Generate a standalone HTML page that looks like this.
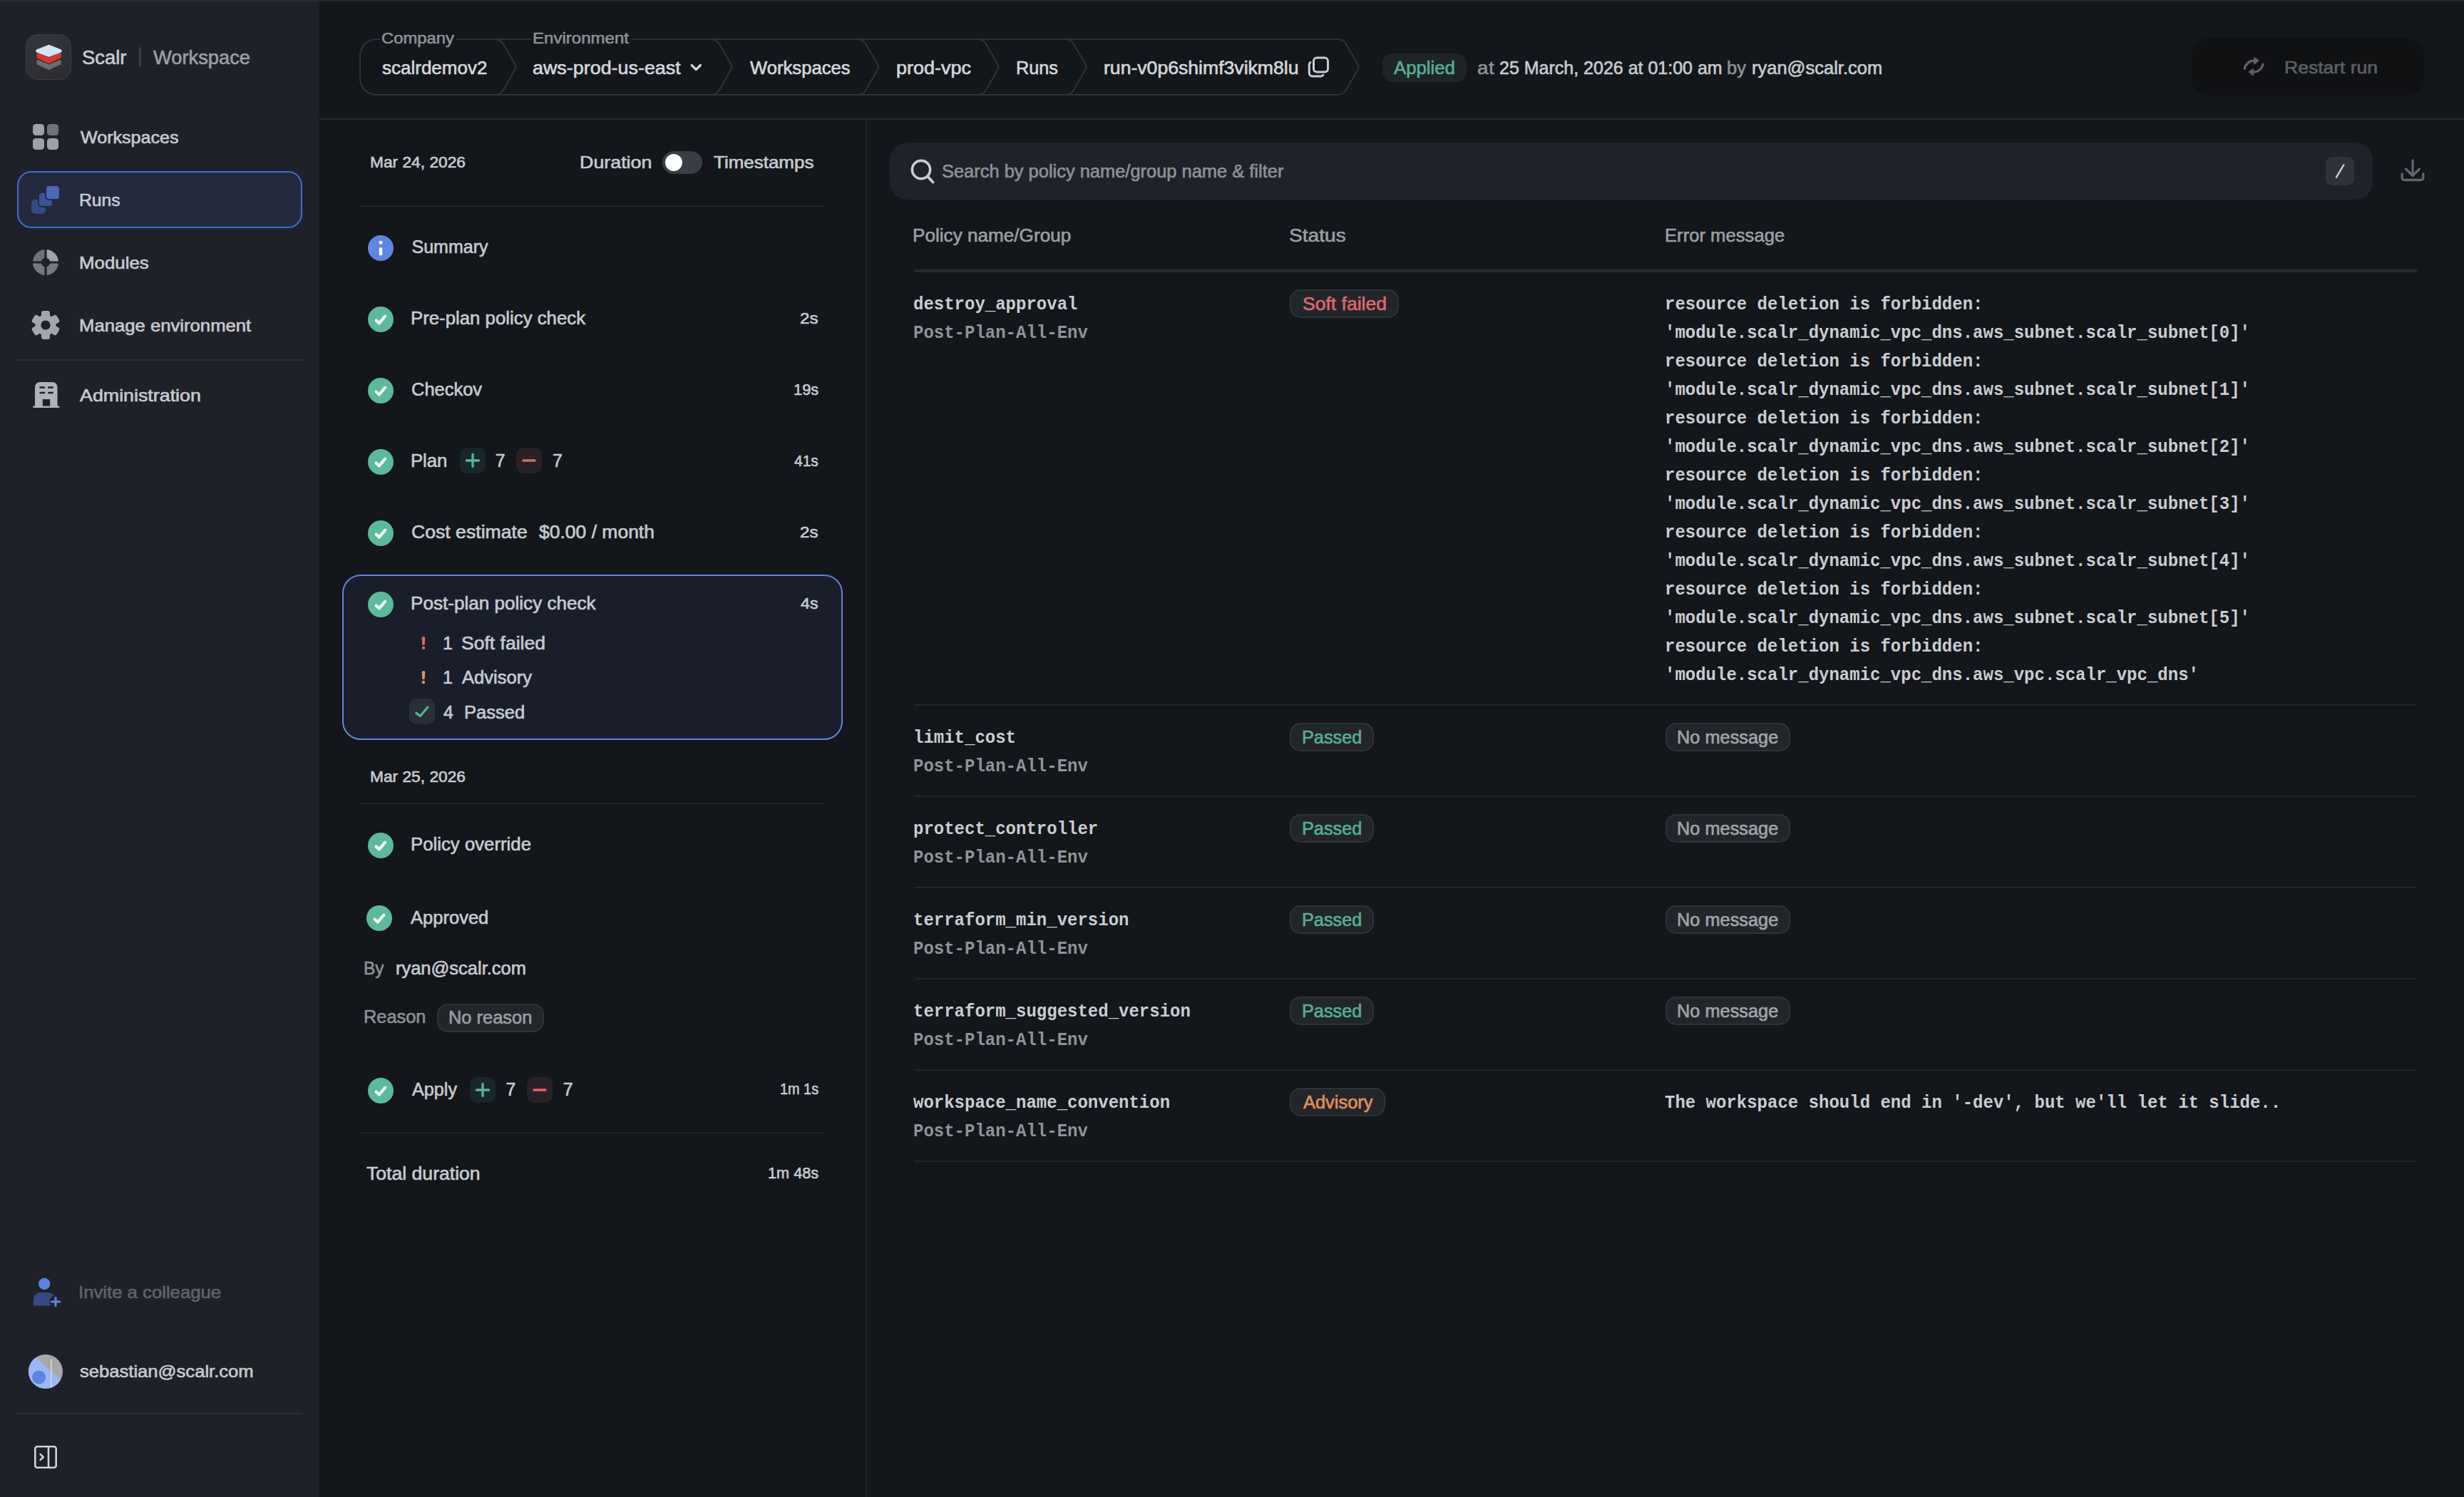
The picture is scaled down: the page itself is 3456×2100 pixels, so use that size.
<!DOCTYPE html>
<html lang="en"><head><meta charset="utf-8"><title>Scalr - Run</title>
<style>
html,body{margin:0;padding:0;background:#13161a;}
body{width:3456px;height:2100px;position:relative;overflow:hidden;font-family:"Liberation Sans",sans-serif;}
.t,.m{position:absolute;white-space:pre;line-height:1;font-kerning:normal;transform-origin:0 0;}
.t{font-family:"Liberation Sans",sans-serif;}
.m{font-family:"Liberation Mono",monospace;}
.b{position:absolute;box-sizing:border-box;}
svg{position:absolute;overflow:visible;}
</style></head><body>
<!-- sidebar -->
<div class="b" style="left:0px;top:0px;width:448px;height:2100px;background:#1f2129;"></div>
<div class="b" style="left:36px;top:48px;width:64px;height:64px;background:linear-gradient(160deg,#34363b,#2a2c31);border-radius:16px;border:1.5px solid #3b3d43;"></div>
<svg style="left:36px;top:48px" width="64" height="64" viewBox="0 0 64 64" fill="none">
<path d="M16.5 37 L32.5 43.5 L48.5 37 L48.5 41.5 L32.5 49 L16.5 41.5 Z" fill="#6b6c70" stroke="#6b6c70" stroke-width="2" stroke-linejoin="round"/>
<path d="M16.5 27 L32.5 34 L48.5 27 L48.5 32.3 L32.5 40 L16.5 32.3 Z" fill="#d8362d" stroke="#d8362d" stroke-width="2" stroke-linejoin="round"/>
<path d="M16.5 23.4 L32.5 17 L48.5 23.4 L32.5 29.7 Z" fill="#cfe6f7" stroke="#cfe6f7" stroke-width="4.5" stroke-linejoin="round"/>
</svg>
<div class="b" style="left:194.5px;top:66px;width:3px;height:28px;background:#3a3d45;border-radius:1.5px;"></div>
<div class="b" style="left:24px;top:240px;width:400px;height:80px;background:#232a3d;border-radius:20px;border:2px solid #3b6dd6;"></div>
<svg style="left:44px;top:172px" width="40" height="40" viewBox="0 0 40 40" fill="none">
<rect x="2" y="2" width="16" height="16" rx="4.5" fill="#9ea2a8"/>
<rect x="22" y="2" width="16" height="16" rx="4.5" fill="#6f7379"/>
<rect x="2" y="22" width="16" height="16" rx="4.5" fill="#9ea2a8"/>
<rect x="22" y="22" width="16" height="16" rx="4.5" fill="#9ea2a8"/>
</svg>
<svg style="left:44px;top:260px" width="40" height="40" viewBox="0 0 40 40" fill="none">
<rect x="0" y="20" width="20" height="20" rx="5" fill="#344a80"/>
<rect x="10" y="10" width="20" height="20" rx="5" fill="#3d5392" stroke="#232a3d" stroke-width="2"/>
<rect x="20" y="0" width="20" height="20" rx="5" fill="#4a67b8" stroke="#232a3d" stroke-width="2"/>
</svg>
<svg style="left:44px;top:348px" width="40" height="40" viewBox="0 0 40 40" fill="none">
<path d="M20 20 L20 2 A18 18 0 0 0 2 20 Z" fill="#6e7278"/>
<path d="M20 20 L38 20 A18 18 0 0 0 20 2 Z" fill="#a0a4aa"/>
<path d="M20 20 L2 20 A18 18 0 0 0 20 38 Z" fill="#767a80"/>
<path d="M20 20 L20 38 A18 18 0 0 0 38 20 Z" fill="#767a80"/>
<path d="M20 0 V40 M0 20 H40" stroke="#1f2129" stroke-width="3.2"/>
<circle cx="20" cy="20" r="6.3" fill="#1f2129"/>
</svg>
<svg style="left:44px;top:436px" width="40" height="40" viewBox="0 0 40 40" fill="none"><g fill="#a3a7ad"><rect x="14" y="0" width="12" height="14" rx="3" transform="rotate(0 20 20)"/><rect x="14" y="0" width="12" height="14" rx="3" transform="rotate(60 20 20)"/><rect x="14" y="0" width="12" height="14" rx="3" transform="rotate(120 20 20)"/><rect x="14" y="0" width="12" height="14" rx="3" transform="rotate(180 20 20)"/><rect x="14" y="0" width="12" height="14" rx="3" transform="rotate(240 20 20)"/><rect x="14" y="0" width="12" height="14" rx="3" transform="rotate(300 20 20)"/><circle cx="20" cy="20" r="14.5"/></g><circle cx="20" cy="20" r="6.6" fill="#1f2129"/></svg>
<div class="b" style="left:24px;top:504px;width:400px;height:2px;background:#2d3038;"></div>
<svg style="left:44px;top:532px" width="40" height="42" viewBox="0 0 40 42" fill="none">
<path d="M5 38 V11 A7 7 0 0 1 12 4 H29.5 A7 7 0 0 1 36.5 11 V38 Z" fill="#b0b4ba"/>
<rect x="2" y="37.5" width="37.5" height="2.6" rx="1.3" fill="#b0b4ba"/>
<rect x="11.3" y="10.2" width="8" height="2.5" rx="1.2" fill="#1f2129"/>
<rect x="23" y="10.2" width="8" height="2.5" rx="1.2" fill="#1f2129"/>
<rect x="11.3" y="17.8" width="8" height="2.5" rx="1.2" fill="#1f2129"/>
<rect x="23" y="17.8" width="8" height="2.5" rx="1.2" fill="#1f2129"/>
<rect x="15.8" y="28" width="10.4" height="9.6" fill="#1f2129"/>
</svg>
<svg style="left:44px;top:1790px" width="44" height="44" viewBox="0 0 44 44" fill="none">
<circle cx="18.2" cy="11" r="8.2" fill="#5b84e0"/>
<path d="M3 41.5 V33 A10 10 0 0 1 13 23 H23.5 A10 10 0 0 1 33.5 33 V41.5 Z" fill="#344a80"/>
<circle cx="34" cy="36" r="8.5" fill="#1f2129"/>
<path d="M34 30.3 V41.7 M28.3 36 H39.7" stroke="#5b84e0" stroke-width="3.2" stroke-linecap="round"/>
</svg>
<svg style="left:40px;top:1900px" width="48" height="48" viewBox="0 0 48 48" fill="none">
<defs><clipPath id="av"><circle cx="24" cy="24" r="24"/></clipPath></defs>
<g clip-path="url(#av)"><rect width="48" height="48" fill="#a8a8aa"/>
<path d="M-2 -6 L52 42 L52 52 L-2 52 Z" fill="#9db7f5"/>
<circle cx="14.6" cy="32" r="9.6" fill="#5b84e8"/>
<rect x="31" y="7" width="1.4" height="40" fill="#d9dde6"/></g>
</svg>
<div class="b" style="left:24px;top:1982px;width:400px;height:2px;background:#2d3038;"></div>
<svg style="left:46px;top:2026px" width="36" height="36" viewBox="0 0 36 36" fill="none">
<rect x="3.3" y="3.3" width="29.4" height="29.4" rx="3" stroke="#d0d3d9" stroke-width="2.6"/>
<path d="M22 3 V33" stroke="#d0d3d9" stroke-width="2.6"/>
<path d="M10.5 14 L14.8 18 L10.5 22" stroke="#d0d3d9" stroke-width="2.4" stroke-linecap="round" stroke-linejoin="round"/>
</svg>
<!-- header -->
<div class="b" style="left:448px;top:0px;width:3008px;height:2px;background:#23262a;"></div>
<div class="b" style="left:0px;top:0px;width:448px;height:2px;background:#292c33;"></div>
<div class="b" style="left:448px;top:166px;width:3008px;height:2px;background:#24272c;"></div>
<svg style="left:0px;top:0px" width="3456" height="170" viewBox="0 0 3456 170" fill="none"><g stroke="#2f3338" stroke-width="2" fill="none" stroke-linejoin="round"><path d="M528 55 H1874 Q1884 55 1887.5 61 L1904.5 90.5 Q1906.6 94 1904.5 97.5 L1887.5 127 Q1884 133 1874 133 H528 A23 23 0 0 1 505 110 V78 A23 23 0 0 1 528 55 Z"/><path d="M692 55 Q702 55 705.5 61 L722.5 90.5 Q724.6 94 722.5 97.5 L705.5 127 Q702 133 692 133"/><path d="M995 55 Q1005 55 1008.5 61 L1025.5 90.5 Q1027.6 94 1025.5 97.5 L1008.5 127 Q1005 133 995 133"/><path d="M1200.5 55 Q1210.5 55 1214.0 61 L1231.0 90.5 Q1233.1 94 1231.0 97.5 L1214.0 127 Q1210.5 133 1200.5 133"/><path d="M1369 55 Q1379 55 1382.5 61 L1399.5 90.5 Q1401.6 94 1399.5 97.5 L1382.5 127 Q1379 133 1369 133"/><path d="M1492 55 Q1502 55 1505.5 61 L1522.5 90.5 Q1524.6 94 1522.5 97.5 L1505.5 127 Q1502 133 1492 133"/></g></svg>
<div class="b" style="left:533px;top:40px;width:107px;height:28px;background:#13161a;"></div>
<div class="b" style="left:745px;top:40px;width:140px;height:28px;background:#13161a;"></div>
<svg style="left:960px;top:80px" width="32" height="32" viewBox="0 0 32 32" fill="none"><path d="M10.2 11.5 L16.3 17.6 L22.4 11.5" stroke="#d3d6dc" stroke-width="3.2" stroke-linecap="round" stroke-linejoin="round"/></svg>
<svg style="left:1832px;top:76px" width="36" height="36" viewBox="0 0 36 36" fill="none">
<rect x="10.5" y="5" width="20" height="20" rx="4.5" stroke="#c9ccd3" stroke-width="3"/>
<path d="M6 11.5 A3.5 3.5 0 0 0 4.3 14.5 V26.5 A4.5 4.5 0 0 0 8.8 31 H20.8 A3.5 3.5 0 0 0 23.8 29.3" stroke="#c9ccd3" stroke-width="3" stroke-linecap="round"/>
</svg>
<div class="b" style="left:1939px;top:75px;width:118px;height:40px;background:#1f2428;border-radius:14px;"></div>
<div class="b" style="left:3074px;top:54px;width:326px;height:80px;background:#0f1113;border-radius:24px;"></div>
<svg style="left:3145px;top:77px" width="32" height="32" viewBox="0 0 32 32" fill="none">
<g stroke="#5e6064" stroke-width="3.4" stroke-linecap="round" fill="none">
<path d="M3.3 19.3 A13 13 0 0 1 16.3 8.3"/><path d="M28.9 13.1 A13 13 0 0 1 15.9 24.1"/></g>
<g fill="#5e6064" stroke="#5e6064" stroke-width="1.6" stroke-linejoin="round">
<path d="M17 3.9 L22.6 8 L17 12.8 Z"/><path d="M15.2 28.5 L9.6 23.9 L15.2 20 Z"/></g></svg>
<!-- steps -->
<div class="b" style="left:1214px;top:168px;width:2px;height:1932px;background:#202327;"></div>
<div class="b" style="left:929px;top:212px;width:56px;height:32px;background:#3a3d44;border-radius:16px;"></div>
<div class="b" style="left:933px;top:216px;width:24px;height:24px;background:#ffffff;border-radius:12px;"></div>
<div class="b" style="left:504px;top:288px;width:653px;height:2px;background:#202327;"></div>
<svg style="left:516px;top:330px" width="36" height="36" viewBox="0 0 36 36" fill="none"><circle cx="18" cy="18" r="18" fill="#5f86e0"/><circle cx="18" cy="10.3" r="2.5" fill="#fff"/><rect x="15.7" y="17" width="4.6" height="11.5" rx="2.3" fill="#fff"/></svg>
<div class="b" style="left:480px;top:806px;width:702px;height:232px;background:#1a1e2b;border-radius:26px;border:2px solid #6085dc;"></div>
<svg style="left:516px;top:430px" width="36" height="36" viewBox="0 0 36 36" fill="none"><circle cx="18" cy="18" r="18" fill="#5cb99b"/><path d="M11.6 19.6 L15.7 23.6 L24.2 13.6" stroke="#eefaf5" stroke-width="4.2" stroke-linecap="round" stroke-linejoin="round"/></svg>
<svg style="left:516px;top:530px" width="36" height="36" viewBox="0 0 36 36" fill="none"><circle cx="18" cy="18" r="18" fill="#5cb99b"/><path d="M11.6 19.6 L15.7 23.6 L24.2 13.6" stroke="#eefaf5" stroke-width="4.2" stroke-linecap="round" stroke-linejoin="round"/></svg>
<svg style="left:516px;top:629.5px" width="36" height="36" viewBox="0 0 36 36" fill="none"><circle cx="18" cy="18" r="18" fill="#5cb99b"/><path d="M11.6 19.6 L15.7 23.6 L24.2 13.6" stroke="#eefaf5" stroke-width="4.2" stroke-linecap="round" stroke-linejoin="round"/></svg>
<svg style="left:516px;top:729.5px" width="36" height="36" viewBox="0 0 36 36" fill="none"><circle cx="18" cy="18" r="18" fill="#5cb99b"/><path d="M11.6 19.6 L15.7 23.6 L24.2 13.6" stroke="#eefaf5" stroke-width="4.2" stroke-linecap="round" stroke-linejoin="round"/></svg>
<svg style="left:516px;top:829.7px" width="36" height="36" viewBox="0 0 36 36" fill="none"><circle cx="18" cy="18" r="18" fill="#5cb99b"/><path d="M11.6 19.6 L15.7 23.6 L24.2 13.6" stroke="#eefaf5" stroke-width="4.2" stroke-linecap="round" stroke-linejoin="round"/></svg>
<svg style="left:516px;top:1167.5px" width="36" height="36" viewBox="0 0 36 36" fill="none"><circle cx="18" cy="18" r="18" fill="#5cb99b"/><path d="M11.6 19.6 L15.7 23.6 L24.2 13.6" stroke="#eefaf5" stroke-width="4.2" stroke-linecap="round" stroke-linejoin="round"/></svg>
<svg style="left:516px;top:1511.5px" width="36" height="36" viewBox="0 0 36 36" fill="none"><circle cx="18" cy="18" r="18" fill="#5cb99b"/><path d="M11.6 19.6 L15.7 23.6 L24.2 13.6" stroke="#eefaf5" stroke-width="4.2" stroke-linecap="round" stroke-linejoin="round"/></svg>
<svg style="left:514px;top:1269.6px" width="36" height="36" viewBox="0 0 36 36" fill="none"><circle cx="18" cy="18" r="18" fill="#5cb99b"/><path d="M11.6 19.6 L15.7 23.6 L24.2 13.6" stroke="#eefaf5" stroke-width="4.2" stroke-linecap="round" stroke-linejoin="round"/></svg>
<div class="b" style="left:644.5px;top:628px;width:36px;height:36px;background:#17272a;border-radius:10px;"></div>
<svg style="left:644.5px;top:628px" width="36" height="36" viewBox="0 0 36 36" fill="none"><path d="M18 9.5 V26.5 M9.5 18 H26.5" stroke="#58b497" stroke-width="3.4" stroke-linecap="round"/></svg>
<div class="b" style="left:724px;top:628px;width:36px;height:36px;background:#2a2126;border-radius:10px;"></div>
<svg style="left:724px;top:628px" width="36" height="36" viewBox="0 0 36 36" fill="none"><path d="M10 18 H26" stroke="#dd6568" stroke-width="3.4" stroke-linecap="round"/></svg>
<div class="b" style="left:658.5px;top:1511px;width:36px;height:36px;background:#17272a;border-radius:10px;"></div>
<svg style="left:658.5px;top:1511px" width="36" height="36" viewBox="0 0 36 36" fill="none"><path d="M18 9.5 V26.5 M9.5 18 H26.5" stroke="#58b497" stroke-width="3.4" stroke-linecap="round"/></svg>
<div class="b" style="left:739px;top:1511px;width:36px;height:36px;background:#2a2126;border-radius:10px;"></div>
<svg style="left:739px;top:1511px" width="36" height="36" viewBox="0 0 36 36" fill="none"><path d="M10 18 H26" stroke="#dd6568" stroke-width="3.4" stroke-linecap="round"/></svg>
<svg style="left:588px;top:890px" width="12" height="24" viewBox="0 0 12 24" fill="none"><path d="M3.7 5.4 A2.3 2.3 0 0 1 8.3 5.4 L7.7 13.6 A1.7 1.7 0 0 1 4.3 13.6 Z" fill="#e2686b"/><circle cx="6" cy="19" r="2.2" fill="#e2686b"/></svg>
<svg style="left:588px;top:938px" width="12" height="24" viewBox="0 0 12 24" fill="none"><path d="M3.7 5.4 A2.3 2.3 0 0 1 8.3 5.4 L7.7 13.6 A1.7 1.7 0 0 1 4.3 13.6 Z" fill="#e8935a"/><circle cx="6" cy="19" r="2.2" fill="#e8935a"/></svg>
<div class="b" style="left:574px;top:980px;width:36px;height:36px;background:#2a2f37;border-radius:10px;"></div>
<svg style="left:574px;top:980px" width="36" height="36" viewBox="0 0 36 36" fill="none"><path d="M9.9 20.3 L15.3 24.5 L26 12" stroke="#54b194" stroke-width="3.4" stroke-linecap="round" stroke-linejoin="round"/></svg>
<div class="b" style="left:504px;top:1126px;width:653px;height:2px;background:#202327;"></div>
<div class="b" style="left:613px;top:1408px;width:150px;height:40px;background:#22262b;border-radius:15px;border:2px solid #30343a;"></div>
<div class="b" style="left:504px;top:1588px;width:653px;height:2px;background:#202327;"></div>
<!-- policies -->
<div class="b" style="left:1248px;top:200px;width:2080px;height:80px;background:#1f2229;border-radius:24px;"></div>
<svg style="left:1272px;top:218px" width="44" height="44" viewBox="0 0 44 44" fill="none"><circle cx="20" cy="20" r="12.6" stroke="#c9ccd3" stroke-width="3.6"/><path d="M29.2 29.6 L36.5 37.5" stroke="#c9ccd3" stroke-width="3.8" stroke-linecap="round"/></svg>
<div class="b" style="left:3262px;top:220px;width:40px;height:40px;background:#30333b;border-radius:9px;"></div>
<svg style="left:3262px;top:220px" width="40" height="40" viewBox="0 0 40 40" fill="none"><path d="M14.5 29.5 L25.8 10.5" stroke="#d0d3d9" stroke-width="2.4"/></svg>
<svg style="left:3366px;top:222px" width="36" height="36" viewBox="0 0 36 36" fill="none"><g stroke="#62666c" stroke-width="3.3" stroke-linecap="round" stroke-linejoin="round"><path d="M18 3 V24"/><path d="M8.5 15 L18 24.5 L27.5 15"/><path d="M3.2 22 V27.5 A3 3 0 0 0 6.2 30.5 H29.8 A3 3 0 0 0 32.8 27.5 V22"/></g></svg>
<div class="b" style="left:1282px;top:378px;width:2108px;height:4px;background:#262a2e;"></div>
<div class="b" style="left:1282px;top:988px;width:2108px;height:2px;background:#22252a;"></div>
<div class="b" style="left:1282px;top:1116px;width:2108px;height:2px;background:#22252a;"></div>
<div class="b" style="left:1282px;top:1244px;width:2108px;height:2px;background:#22252a;"></div>
<div class="b" style="left:1282px;top:1372px;width:2108px;height:2px;background:#22252a;"></div>
<div class="b" style="left:1282px;top:1500px;width:2108px;height:2px;background:#22252a;"></div>
<div class="b" style="left:1282px;top:1628px;width:2108px;height:2px;background:#22252a;"></div>
<div class="b" style="left:1809px;top:406px;width:153px;height:40px;background:#22262b;border-radius:15px;border:2px solid #30343a;"></div>
<div class="b" style="left:1809px;top:1014px;width:118px;height:40px;background:#22262b;border-radius:15px;border:2px solid #30343a;"></div>
<div class="b" style="left:2336px;top:1014px;width:175px;height:40px;background:#22262b;border-radius:15px;border:2px solid #30343a;"></div>
<div class="b" style="left:1809px;top:1142px;width:118px;height:40px;background:#22262b;border-radius:15px;border:2px solid #30343a;"></div>
<div class="b" style="left:2336px;top:1142px;width:175px;height:40px;background:#22262b;border-radius:15px;border:2px solid #30343a;"></div>
<div class="b" style="left:1809px;top:1270px;width:118px;height:40px;background:#22262b;border-radius:15px;border:2px solid #30343a;"></div>
<div class="b" style="left:2336px;top:1270px;width:175px;height:40px;background:#22262b;border-radius:15px;border:2px solid #30343a;"></div>
<div class="b" style="left:1809px;top:1398px;width:118px;height:40px;background:#22262b;border-radius:15px;border:2px solid #30343a;"></div>
<div class="b" style="left:2336px;top:1398px;width:175px;height:40px;background:#22262b;border-radius:15px;border:2px solid #30343a;"></div>
<div class="b" style="left:1809px;top:1526px;width:134px;height:40px;background:#22262b;border-radius:15px;border:2px solid #30343a;"></div>
<span class="t" style="left:115.39px;top:67.81px;font-size:27px;color:#c6c9d0;transform:scaleX(1.0145);-webkit-text-stroke:0.65px #c6c9d0;">Scalr</span>
<span class="t" style="left:215.00px;top:67.81px;font-size:27px;color:#9a9da5;transform:scaleX(1.0110);-webkit-text-stroke:0.65px #9a9da5;">Workspace</span>
<span class="t" style="left:112.50px;top:180.87px;font-size:24px;color:#c6c9d0;transform:scaleX(1.0448);-webkit-text-stroke:0.65px #c6c9d0;">Workspaces</span>
<span class="t" style="left:111.47px;top:268.67px;font-size:24px;color:#c6c9d0;transform:scaleX(1.0268);-webkit-text-stroke:0.65px #c6c9d0;">Runs</span>
<span class="t" style="left:111.32px;top:356.67px;font-size:24px;color:#c6c9d0;transform:scaleX(1.0767);-webkit-text-stroke:0.65px #c6c9d0;">Modules</span>
<span class="t" style="left:111.33px;top:444.57px;font-size:24px;color:#c6c9d0;transform:scaleX(1.0698);-webkit-text-stroke:0.65px #c6c9d0;">Manage environment</span>
<span class="t" style="left:112.40px;top:542.87px;font-size:24px;color:#c6c9d0;transform:scaleX(1.1173);-webkit-text-stroke:0.65px #c6c9d0;">Administration</span>
<span class="t" style="left:110.26px;top:1800.87px;font-size:24px;color:#5f636b;transform:scaleX(1.0713);-webkit-text-stroke:0.65px #5f636b;">Invite a colleague</span>
<span class="t" style="left:112.40px;top:1912.27px;font-size:24px;color:#c6c9d0;transform:scaleX(1.0665);-webkit-text-stroke:0.65px #c6c9d0;">sebastian@scalr.com</span>
<span class="t" style="left:534.92px;top:43.25px;font-size:22px;color:#8c9096;transform:scaleX(1.0810);-webkit-text-stroke:0.65px #8c9096;">Company</span>
<span class="t" style="left:746.91px;top:43.25px;font-size:22px;color:#8c9096;transform:scaleX(1.0932);-webkit-text-stroke:0.65px #8c9096;">Environment</span>
<span class="t" style="left:536.00px;top:82.29px;font-size:26px;color:#d3d6dc;-webkit-text-stroke:0.65px #d3d6dc;">scalrdemov2</span>
<span class="t" style="left:746.97px;top:82.29px;font-size:26px;color:#d3d6dc;transform:scaleX(1.0342);-webkit-text-stroke:0.65px #d3d6dc;">aws-prod-us-east</span>
<span class="t" style="left:1052.00px;top:82.29px;font-size:26px;color:#d3d6dc;transform:scaleX(0.9855);-webkit-text-stroke:0.65px #d3d6dc;">Workspaces</span>
<span class="t" style="left:1256.76px;top:82.29px;font-size:26px;color:#d3d6dc;transform:scaleX(1.0384);-webkit-text-stroke:0.65px #d3d6dc;">prod-vpc</span>
<span class="t" style="left:1425.06px;top:82.29px;font-size:26px;color:#d3d6dc;transform:scaleX(0.9711);-webkit-text-stroke:0.65px #d3d6dc;">Runs</span>
<span class="t" style="left:1547.98px;top:82.29px;font-size:26px;color:#d3d6dc;transform:scaleX(1.0232);-webkit-text-stroke:0.65px #d3d6dc;">run-v0p6shimf3vikm8lu</span>
<span class="t" style="left:1955.00px;top:82.78px;font-size:25px;color:#58ad91;transform:scaleX(1.0304);-webkit-text-stroke:0.65px #58ad91;">Applied</span>
<span class="t" style="left:2071.88px;top:82.78px;font-size:25px;color:#8c9096;letter-spacing:0.453px;transform:scaleX(1.1200);-webkit-text-stroke:0.65px #8c9096;">at</span>
<span class="t" style="left:2103.00px;top:82.78px;font-size:25px;color:#c6c9d0;-webkit-text-stroke:0.65px #c6c9d0;">25 March, 2026 at 01:00 am</span>
<span class="t" style="left:2421.98px;top:82.78px;font-size:25px;color:#8c9096;transform:scaleX(1.0192);-webkit-text-stroke:0.65px #8c9096;">by</span>
<span class="t" style="left:2456.58px;top:82.78px;font-size:25px;color:#c6c9d0;transform:scaleX(1.0199);-webkit-text-stroke:0.65px #c6c9d0;">ryan@scalr.com</span>
<span class="t" style="left:3203.90px;top:82.77px;font-size:24px;color:#5e6064;transform:scaleX(1.1043);-webkit-text-stroke:0.65px #5e6064;">Restart run</span>
<span class="t" style="left:518.97px;top:217.05px;font-size:22px;color:#c6c9d0;transform:scaleX(1.0335);-webkit-text-stroke:0.65px #c6c9d0;">Mar 24, 2026</span>
<span class="t" style="left:812.88px;top:216.07px;font-size:24px;color:#c6c9d0;transform:scaleX(1.1181);-webkit-text-stroke:0.65px #c6c9d0;">Duration</span>
<span class="t" style="left:1001.00px;top:216.07px;font-size:24px;color:#c6c9d0;transform:scaleX(1.0817);-webkit-text-stroke:0.65px #c6c9d0;">Timestamps</span>
<span class="t" style="left:577.50px;top:334.13px;font-size:25px;color:#c6c9d0;-webkit-text-stroke:0.65px #c6c9d0;">Summary</span>
<span class="t" style="left:575.94px;top:433.83px;font-size:25px;color:#c6c9d0;transform:scaleX(1.0313);-webkit-text-stroke:0.65px #c6c9d0;">Pre-plan policy check</span>
<span class="t" style="left:1122.33px;top:435.95px;font-size:22.5px;color:#c6c9d0;transform:scaleX(1.0749);-webkit-text-stroke:0.65px #c6c9d0;">2s</span>
<span class="t" style="left:576.98px;top:533.83px;font-size:25px;color:#c6c9d0;transform:scaleX(1.0179);-webkit-text-stroke:0.65px #c6c9d0;">Checkov</span>
<span class="t" style="left:1112.63px;top:535.95px;font-size:22.5px;color:#c6c9d0;transform:scaleX(0.9707);-webkit-text-stroke:0.65px #c6c9d0;">19s</span>
<span class="t" style="left:576.25px;top:633.63px;font-size:25px;color:#c6c9d0;transform:scaleX(1.0269);-webkit-text-stroke:0.65px #c6c9d0;">Plan</span>
<span class="t" style="left:694.80px;top:633.63px;font-size:25px;color:#c6c9d0;-webkit-text-stroke:0.65px #c6c9d0;">7</span>
<span class="t" style="left:775.00px;top:633.63px;font-size:25px;color:#c6c9d0;-webkit-text-stroke:0.65px #c6c9d0;">7</span>
<span class="t" style="left:1114.00px;top:635.95px;font-size:22.5px;color:#c6c9d0;transform:scaleX(0.9326);-webkit-text-stroke:0.65px #c6c9d0;">41s</span>
<span class="t" style="left:577.24px;top:734.03px;font-size:25px;color:#c6c9d0;transform:scaleX(1.0647);-webkit-text-stroke:0.65px #c6c9d0;">Cost estimate</span>
<span class="t" style="left:756.00px;top:734.03px;font-size:25px;color:#c6c9d0;transform:scaleX(1.0594);-webkit-text-stroke:0.65px #c6c9d0;">$0.00 / month</span>
<span class="t" style="left:1122.33px;top:735.95px;font-size:22.5px;color:#c6c9d0;transform:scaleX(1.0749);-webkit-text-stroke:0.65px #c6c9d0;">2s</span>
<span class="t" style="left:575.91px;top:833.83px;font-size:25px;color:#c6c9d0;transform:scaleX(1.0436);-webkit-text-stroke:0.65px #c6c9d0;">Post-plan policy check</span>
<span class="t" style="left:1123.40px;top:835.95px;font-size:22.5px;color:#c6c9d0;transform:scaleX(1.0292);-webkit-text-stroke:0.65px #c6c9d0;">4s</span>
<span class="t" style="left:621.00px;top:889.58px;font-size:25px;color:#c6c9d0;-webkit-text-stroke:0.65px #c6c9d0;">1</span>
<span class="t" style="left:647.34px;top:889.58px;font-size:25px;color:#c6c9d0;transform:scaleX(1.0615);-webkit-text-stroke:0.65px #c6c9d0;">Soft failed</span>
<span class="t" style="left:621.00px;top:937.58px;font-size:25px;color:#c6c9d0;-webkit-text-stroke:0.65px #c6c9d0;">1</span>
<span class="t" style="left:648.00px;top:937.58px;font-size:25px;color:#c6c9d0;transform:scaleX(1.0222);-webkit-text-stroke:0.65px #c6c9d0;">Advisory</span>
<span class="t" style="left:622.00px;top:986.58px;font-size:25px;color:#c6c9d0;-webkit-text-stroke:0.65px #c6c9d0;">4</span>
<span class="t" style="left:650.65px;top:986.58px;font-size:25px;color:#c6c9d0;transform:scaleX(1.0226);-webkit-text-stroke:0.65px #c6c9d0;">Passed</span>
<span class="t" style="left:518.97px;top:1079.25px;font-size:22px;color:#c6c9d0;transform:scaleX(1.0335);-webkit-text-stroke:0.65px #c6c9d0;">Mar 25, 2026</span>
<span class="t" style="left:575.94px;top:1171.78px;font-size:25px;color:#c6c9d0;transform:scaleX(1.0307);-webkit-text-stroke:0.65px #c6c9d0;">Policy override</span>
<span class="t" style="left:576.00px;top:1274.78px;font-size:25px;color:#c6c9d0;transform:scaleX(1.0215);-webkit-text-stroke:0.65px #c6c9d0;">Approved</span>
<span class="t" style="left:510.05px;top:1345.78px;font-size:25px;color:#8c9096;transform:scaleX(0.9756);-webkit-text-stroke:0.65px #8c9096;">By</span>
<span class="t" style="left:554.68px;top:1345.78px;font-size:25px;color:#c6c9d0;transform:scaleX(1.0182);-webkit-text-stroke:0.65px #c6c9d0;">ryan@scalr.com</span>
<span class="t" style="left:509.97px;top:1413.78px;font-size:25px;color:#8c9096;transform:scaleX(1.0136);-webkit-text-stroke:0.65px #8c9096;">Reason</span>
<span class="t" style="left:629.37px;top:1415.28px;font-size:25px;color:#9a9da3;transform:scaleX(1.0174);-webkit-text-stroke:0.65px #9a9da3;">No reason</span>
<span class="t" style="left:578.00px;top:1515.78px;font-size:25px;color:#c6c9d0;transform:scaleX(1.0074);-webkit-text-stroke:0.65px #c6c9d0;">Apply</span>
<span class="t" style="left:709.40px;top:1515.78px;font-size:25px;color:#c6c9d0;-webkit-text-stroke:0.65px #c6c9d0;">7</span>
<span class="t" style="left:789.80px;top:1515.78px;font-size:25px;color:#c6c9d0;-webkit-text-stroke:0.65px #c6c9d0;">7</span>
<span class="t" style="left:1093.72px;top:1517.00px;font-size:22.5px;color:#c6c9d0;transform:scaleX(0.8830);-webkit-text-stroke:0.65px #c6c9d0;">1m 1s</span>
<span class="t" style="left:513.80px;top:1633.78px;font-size:25px;color:#c6c9d0;transform:scaleX(1.0637);-webkit-text-stroke:0.65px #c6c9d0;">Total duration</span>
<span class="t" style="left:1076.63px;top:1635.00px;font-size:22.5px;color:#c6c9d0;transform:scaleX(0.9651);-webkit-text-stroke:0.65px #c6c9d0;">1m 48s</span>
<span class="t" style="left:1320.98px;top:228.28px;font-size:25px;color:#8c9096;transform:scaleX(1.0176);-webkit-text-stroke:0.65px #8c9096;">Search by policy name/group name &amp; filter</span>
<span class="t" style="left:1279.95px;top:317.54px;font-size:25.5px;color:#9a9da3;transform:scaleX(1.0248);-webkit-text-stroke:0.65px #9a9da3;">Policy name/Group</span>
<span class="t" style="left:1807.90px;top:317.54px;font-size:25.5px;color:#9a9da3;transform:scaleX(1.1029);-webkit-text-stroke:0.65px #9a9da3;">Status</span>
<span class="t" style="left:2334.59px;top:317.54px;font-size:25.5px;color:#9a9da3;transform:scaleX(1.0058);-webkit-text-stroke:0.65px #9a9da3;">Error message</span>
<span class="t" style="left:1826.64px;top:413.78px;font-size:25px;color:#dc676b;transform:scaleX(1.0615);-webkit-text-stroke:0.65px #dc676b;">Soft failed</span>
<span class="t" style="left:1825.68px;top:1021.78px;font-size:25px;color:#58ad91;transform:scaleX(1.0102);-webkit-text-stroke:0.65px #58ad91;">Passed</span>
<span class="t" style="left:2351.97px;top:1021.78px;font-size:25px;color:#a0a3a9;transform:scaleX(1.0135);-webkit-text-stroke:0.65px #a0a3a9;">No message</span>
<span class="t" style="left:1825.68px;top:1149.78px;font-size:25px;color:#58ad91;transform:scaleX(1.0102);-webkit-text-stroke:0.65px #58ad91;">Passed</span>
<span class="t" style="left:2351.97px;top:1149.78px;font-size:25px;color:#a0a3a9;transform:scaleX(1.0135);-webkit-text-stroke:0.65px #a0a3a9;">No message</span>
<span class="t" style="left:1825.68px;top:1277.78px;font-size:25px;color:#58ad91;transform:scaleX(1.0102);-webkit-text-stroke:0.65px #58ad91;">Passed</span>
<span class="t" style="left:2351.97px;top:1277.78px;font-size:25px;color:#a0a3a9;transform:scaleX(1.0135);-webkit-text-stroke:0.65px #a0a3a9;">No message</span>
<span class="t" style="left:1825.68px;top:1405.78px;font-size:25px;color:#58ad91;transform:scaleX(1.0102);-webkit-text-stroke:0.65px #58ad91;">Passed</span>
<span class="t" style="left:2351.97px;top:1405.78px;font-size:25px;color:#a0a3a9;transform:scaleX(1.0135);-webkit-text-stroke:0.65px #a0a3a9;">No message</span>
<span class="t" style="left:1827.70px;top:1533.78px;font-size:25px;color:#e08f5a;transform:scaleX(1.0170);-webkit-text-stroke:0.65px #e08f5a;">Advisory</span>
<span class="m" style="left:1281.00px;top:413.58px;font-size:26px;color:#c9ccd2;transform:scaleX(0.9231);font-weight:700;">destroy_approval</span>
<span class="m" style="left:1281.00px;top:453.58px;font-size:26px;color:#8f9399;transform:scaleX(0.9231);font-weight:700;">Post-Plan-All-Env</span>
<span class="m" style="left:1281.00px;top:1021.58px;font-size:26px;color:#c9ccd2;transform:scaleX(0.9231);font-weight:700;">limit_cost</span>
<span class="m" style="left:1281.00px;top:1061.58px;font-size:26px;color:#8f9399;transform:scaleX(0.9231);font-weight:700;">Post-Plan-All-Env</span>
<span class="m" style="left:1281.00px;top:1149.58px;font-size:26px;color:#c9ccd2;transform:scaleX(0.9231);font-weight:700;">protect_controller</span>
<span class="m" style="left:1281.00px;top:1189.58px;font-size:26px;color:#8f9399;transform:scaleX(0.9231);font-weight:700;">Post-Plan-All-Env</span>
<span class="m" style="left:1281.00px;top:1277.58px;font-size:26px;color:#c9ccd2;transform:scaleX(0.9231);font-weight:700;">terraform_min_version</span>
<span class="m" style="left:1281.00px;top:1317.58px;font-size:26px;color:#8f9399;transform:scaleX(0.9231);font-weight:700;">Post-Plan-All-Env</span>
<span class="m" style="left:1281.00px;top:1405.58px;font-size:26px;color:#c9ccd2;transform:scaleX(0.9231);font-weight:700;">terraform_suggested_version</span>
<span class="m" style="left:1281.00px;top:1445.58px;font-size:26px;color:#8f9399;transform:scaleX(0.9231);font-weight:700;">Post-Plan-All-Env</span>
<span class="m" style="left:1281.00px;top:1533.58px;font-size:26px;color:#c9ccd2;transform:scaleX(0.9231);font-weight:700;">workspace_name_convention</span>
<span class="m" style="left:1281.00px;top:1573.58px;font-size:26px;color:#8f9399;transform:scaleX(0.9231);font-weight:700;">Post-Plan-All-Env</span>
<span class="m" style="left:2335.00px;top:413.58px;font-size:26px;color:#c9ccd2;transform:scaleX(0.9231);font-weight:700;">resource deletion is forbidden:</span>
<span class="m" style="left:2335.00px;top:453.58px;font-size:26px;color:#c9ccd2;transform:scaleX(0.9231);font-weight:700;">&#x27;module.scalr_dynamic_vpc_dns.aws_subnet.scalr_subnet[0]&#x27;</span>
<span class="m" style="left:2335.00px;top:493.58px;font-size:26px;color:#c9ccd2;transform:scaleX(0.9231);font-weight:700;">resource deletion is forbidden:</span>
<span class="m" style="left:2335.00px;top:533.58px;font-size:26px;color:#c9ccd2;transform:scaleX(0.9231);font-weight:700;">&#x27;module.scalr_dynamic_vpc_dns.aws_subnet.scalr_subnet[1]&#x27;</span>
<span class="m" style="left:2335.00px;top:573.58px;font-size:26px;color:#c9ccd2;transform:scaleX(0.9231);font-weight:700;">resource deletion is forbidden:</span>
<span class="m" style="left:2335.00px;top:613.58px;font-size:26px;color:#c9ccd2;transform:scaleX(0.9231);font-weight:700;">&#x27;module.scalr_dynamic_vpc_dns.aws_subnet.scalr_subnet[2]&#x27;</span>
<span class="m" style="left:2335.00px;top:653.58px;font-size:26px;color:#c9ccd2;transform:scaleX(0.9231);font-weight:700;">resource deletion is forbidden:</span>
<span class="m" style="left:2335.00px;top:693.58px;font-size:26px;color:#c9ccd2;transform:scaleX(0.9231);font-weight:700;">&#x27;module.scalr_dynamic_vpc_dns.aws_subnet.scalr_subnet[3]&#x27;</span>
<span class="m" style="left:2335.00px;top:733.58px;font-size:26px;color:#c9ccd2;transform:scaleX(0.9231);font-weight:700;">resource deletion is forbidden:</span>
<span class="m" style="left:2335.00px;top:773.58px;font-size:26px;color:#c9ccd2;transform:scaleX(0.9231);font-weight:700;">&#x27;module.scalr_dynamic_vpc_dns.aws_subnet.scalr_subnet[4]&#x27;</span>
<span class="m" style="left:2335.00px;top:813.58px;font-size:26px;color:#c9ccd2;transform:scaleX(0.9231);font-weight:700;">resource deletion is forbidden:</span>
<span class="m" style="left:2335.00px;top:853.58px;font-size:26px;color:#c9ccd2;transform:scaleX(0.9231);font-weight:700;">&#x27;module.scalr_dynamic_vpc_dns.aws_subnet.scalr_subnet[5]&#x27;</span>
<span class="m" style="left:2335.00px;top:893.58px;font-size:26px;color:#c9ccd2;transform:scaleX(0.9231);font-weight:700;">resource deletion is forbidden:</span>
<span class="m" style="left:2335.00px;top:933.58px;font-size:26px;color:#c9ccd2;transform:scaleX(0.9231);font-weight:700;">&#x27;module.scalr_dynamic_vpc_dns.aws_vpc.scalr_vpc_dns&#x27;</span>
<span class="m" style="left:2335.00px;top:1533.58px;font-size:26px;color:#c9ccd2;transform:scaleX(0.9231);font-weight:700;">The workspace should end in &#x27;-dev&#x27;, but we&#x27;ll let it slide..</span>
</body></html>
